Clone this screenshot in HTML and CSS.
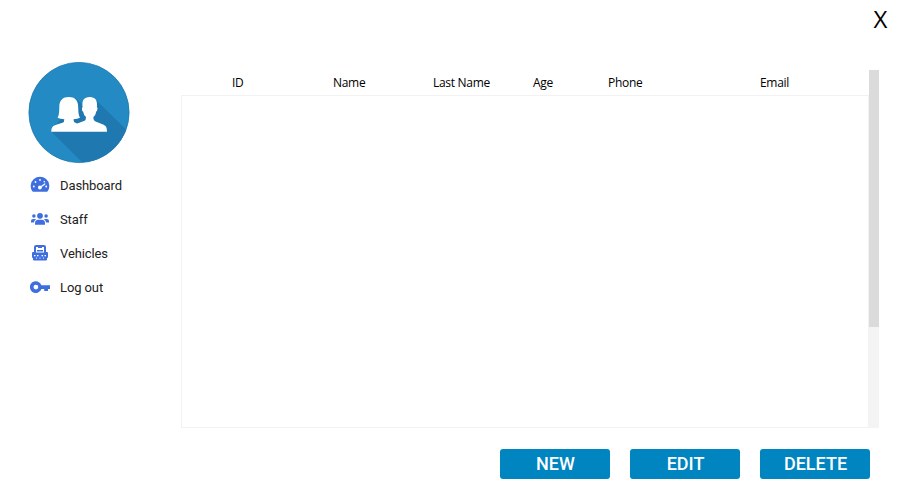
FILE: index.html
```html
<!DOCTYPE html>
<html lang="en">
<head>
<meta charset="utf-8">
<title>Staff</title>
<link rel="stylesheet" href="styles.css">
</head>
<body>
<header class="titlebar"><button class="close">X</button></header>
<div class="layout">
  <aside class="sidebar">
    <svg class="logo" viewBox="28 62 102 102">
      <defs><clipPath id="disc"><circle cx="79" cy="112.5" r="50"/></clipPath></defs>
      <circle cx="79" cy="112.5" r="50.1" fill="#238ac4" stroke="#1c79b0" stroke-width=".8"/>
      <path clip-path="url(#disc)" fill="#1f79b0" d="M75 98 83 105 96 100 137 140 92 172 51.5 131.8Z"/>
      <path fill="#fff" d="M51.3 131.8C51.3 127 53 125.5 57 124.5L62.5 122.8Q64.5 122 64.3 119.2Q60 119.2 57.6 117.8Q59.3 115.5 59.3 107C59.3 100 63 97 68.800 97S78.200 100 78.200 107Q78.200 115.500 80 117.800Q77.500 119.200 73.500 119.200Q73.300 122 75.500 122.800L77.200 123.400L84 121Q86.200 120 86 117Q83.500 115 83.100 111.500Q81.800 111 81.900 108.400Q82 107.500 82.600 107.300C81.700 100.500 84 97 89.700 97S97.700 100.500 96.900 107.300Q97.600 107.500 97.500 108.800Q97.300 111 96.300 111.500Q95.800 115 93.400 117Q93.200 120.500 95.500 121.500L102.500 124.300C106 125.700 107 127.300 107 131.800Z"/>
    </svg>
    <nav class="menu">
      <a class="item"><svg class="icon" viewBox="0 0 20 20"><path fill="#3f6fdf" d="M2.300 16.300A9.300 9.300 0 1 1 17.700 16.300Q17.400 16.700 16.900 16.700H3.100Q2.600 16.700 2.300 16.300Z"/><g fill="#fff"><circle cx="3.800" cy="11.500" r=".9"/><circle cx="5.500" cy="7" r=".9"/><circle cx="10" cy="5" r=".9"/><circle cx="16.200" cy="11.500" r=".9"/><circle cx="14.300" cy="6.700" r=".8"/><circle cx="9.900" cy="12.500" r="1.900"/></g><path stroke="#fff" stroke-width="1.200" stroke-linecap="round" d="M10 12.500 14.800 8.900"/></svg><span>Dashboard</span></a>
      <a class="item"><svg class="icon" viewBox="0 0 20 20"><g fill="#3f6fdf"><circle cx="10" cy="6.800" r="2.900"/><circle cx="3.900" cy="7" r="1.800"/><circle cx="16.100" cy="7" r="1.800"/><path d="M5 15.700V14.200Q5 10.700 8.200 10.700H11.800Q15 10.700 15 14.200V15.700ZM1 13.500V12Q1 9.900 3.100 9.900H5.200L6 10.300Q4.100 11.500 3.900 13.500ZM19 13.500V12Q19 9.900 16.900 9.900H14.800L14 10.300Q15.900 11.500 16.100 13.500Z"/></g></svg><span>Staff</span></a>
      <a class="item"><svg class="icon" viewBox="0 0 20 20"><g fill="#3f6fdf"><path fill-rule="evenodd" d="M4 9V4Q4 2 6 2H14Q16 2 16 4V9H17Q18 9 18 10V13.500Q18 15 17 15.200V16.500Q17 17.500 16 17.500H4Q3 17.500 3 16.500V15.200Q2 15 2 13.500V10Q2 9 3 9ZM6 4V9.500H14V4Z"/><path d="M8 4H12V5H8ZM7 7H13V8.500H7Z"/></g><g fill="#fff"><rect x="4" y="12" width="1.500" height="1.300"/><rect x="14.500" y="12" width="1.500" height="1.300"/><rect x="7" y="12" width="1.500" height="1.300"/><rect x="11.500" y="12" width="1.500" height="1.300"/><rect x="6" y="14.600" width="1" height="1"/><rect x="9.500" y="14.600" width="1" height="1"/><rect x="13" y="14.600" width="1" height="1"/></g></svg><span>Vehicles</span></a>
      <a class="item"><svg class="icon" viewBox="0 0 20 20"><path fill="#3f6fdf" fill-rule="evenodd" d="M11.400 8.300A5.900 5.900 0 1 0 11.400 11.900H14.200V14H18V11.900H20V8.300ZM5.900 7.700A2.400 2.400 0 1 1 5.900 12.500A2.400 2.400 0 1 1 5.900 7.700Z"/></svg><span>Log out</span></a>
    </nav>
  </aside>
  <main class="content">
    <div class="table-wrap">
      <section class="table">
        <div class="head"><span>ID</span><span>Name</span><span>Last Name</span><span>Age</span><span>Phone</span><span>Email</span></div>
        <div class="rows"></div>
      </section>
      <div class="track"><div class="thumb"></div></div>
    </div>
    <div class="actions"><button>NEW</button><button>EDIT</button><button>DELETE</button></div>
  </main>
</div>
</body>
</html>
```
FILE: styles.css
```css
* { box-sizing: border-box; }
body { margin: 0; width: 899px; height: 495px; overflow: hidden; background: #fff; font-family: Roboto, sans-serif; }
button { border: 0; padding: 0; font-family: inherit; }
.titlebar { height: 62px; display: flex; justify-content: flex-end; padding: 4px 11px 0 0; }
.close { width: 15px; height: 30px; background: none; color: #000; font: 24px/30px "Open Sans", sans-serif; }
.layout { display: flex; }
.sidebar { width: 181px; padding-left: 28px; }
.logo { display: block; width: 102px; height: 102px; }
.menu { display: flex; flex-direction: column; padding: 4px 0 0 2px; }
.item { display: flex; align-items: center; gap: 10px; height: 34px; font-size: 13px; letter-spacing: -.1px; color: #222; }
.item .icon { width: 20px; height: 20px; }
.item span { line-height: 32px; padding-top: 2px; }
.content { width: 698px; padding-top: 8px; }
.table-wrap { display: flex; height: 358px; }
.table { width: 688px; display: flex; flex-direction: column; }
.head { display: grid; grid-template-columns: 101px 100px 100px 75px 152px 1fr; height: 25px; padding-left: 51px; font: 12px/26px "Open Sans", sans-serif; letter-spacing: -.3px; color: #000; white-space: nowrap; }
.rows { flex: 1; border: 1px solid #f2f2f2; }
.track { width: 10px; background: #f4f4f4; }
.thumb { height: 257px; background: #dbdbdb; }
.actions { display: flex; justify-content: flex-end; gap: 20px; padding: 21px 9px 0 0; }
.actions button { width: 110px; height: 30px; border-radius: 3px; background: #0085c0; color: #fff; font-size: 18px; font-weight: 500; line-height: 30px; padding-left: 1px; }
```
